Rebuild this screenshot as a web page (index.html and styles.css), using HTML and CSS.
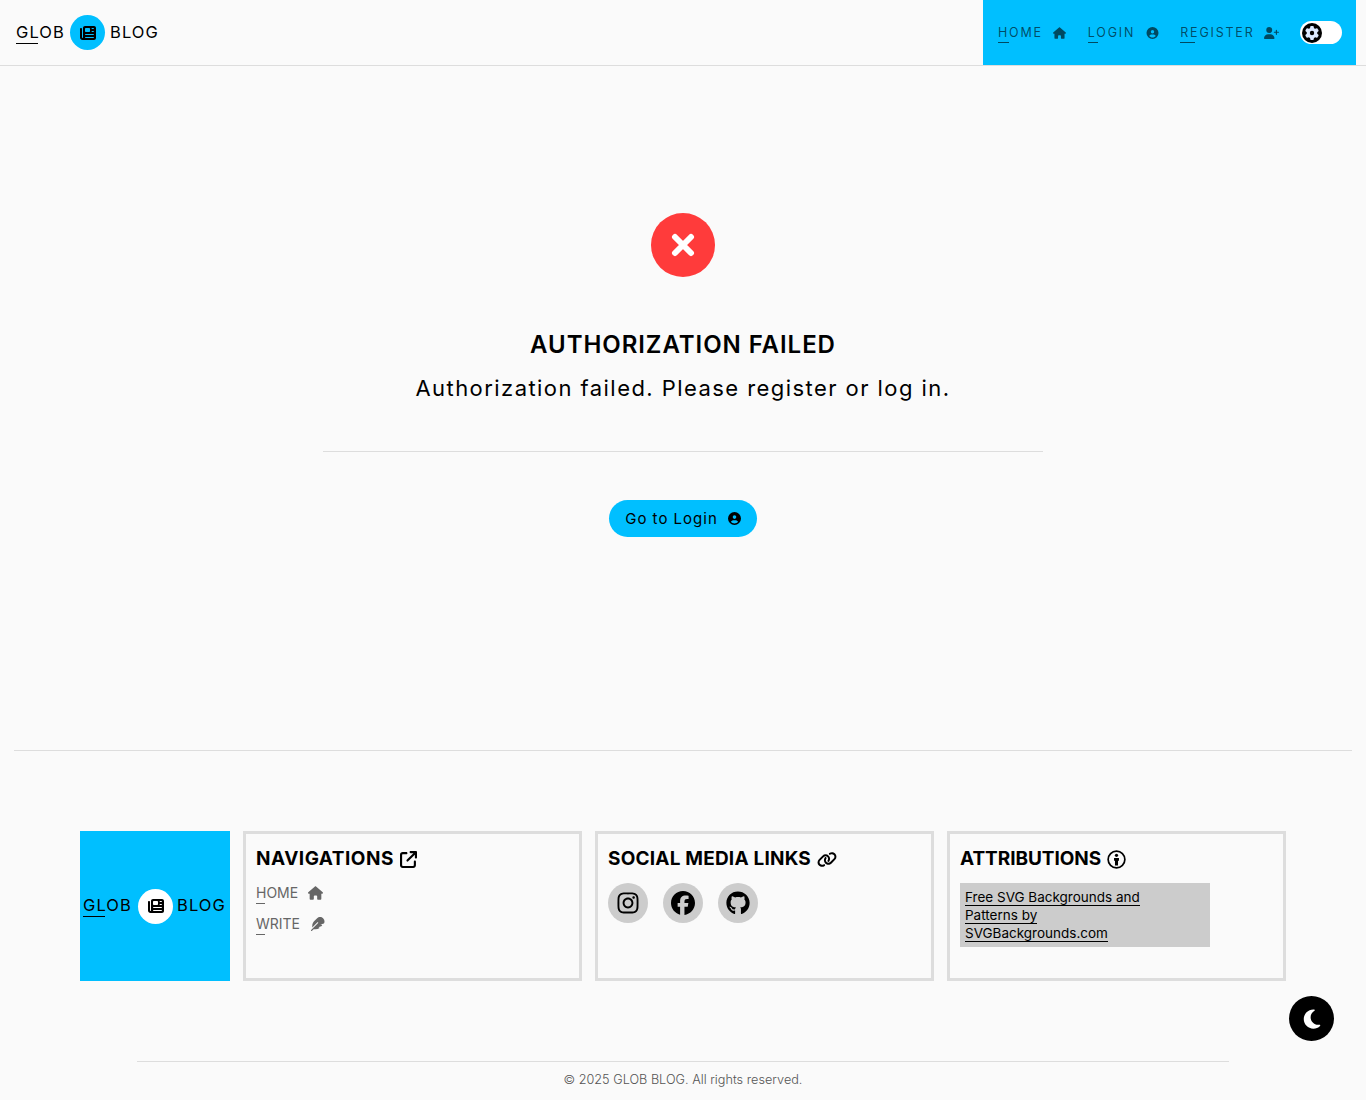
FILE: index.html
```html
<!DOCTYPE html>
<html lang="en">
<head>
  <meta charset="UTF-8" />
  <meta name="viewport" content="width=device-width, initial-scale=1.0"/>
  <title>Glob Blog</title>
  <link rel="stylesheet" href="styles.css">
</head>
<body>
  <svg class="defs" width="0" height="0">
    <symbol id="i-house" viewBox="0 0 576 512"><path d="M575.8 255.5c0 18-15 32.1-32 32.1h-32l.7 160.2c0 2.7-.2 5.4-.5 8.1V472c0 22.1-17.9 40-40 40H456c-1.1 0-2.2 0-3.3-.1c-1.4 .1-2.8 .1-4.2 .1H416 392c-22.1 0-40-17.9-40-40V448 384c0-17.7-14.3-32-32-32H256c-17.7 0-32 14.3-32 32v64 24c0 22.1-17.9 40-40 40H160 128.1c-1.5 0-3-.1-4.5-.2c-1.2 .1-2.4 .2-3.6 .2H104c-22.1 0-40-17.9-40-40V360c0-.9 0-1.9 .1-2.8V287.6H32c-18 0-32-14-32-32.1c0-9 3-17 10-24L266.4 8c7-7 15-8 22-8s15 2 21 7L564.8 231.5c8 7 12 15 11 24z"/></symbol>
    <symbol id="i-user" viewBox="0 0 512 512"><path d="M399 384.2C376.9 345.8 335.4 320 288 320H224c-47.4 0-88.9 25.8-111 64.2c35.2 39.2 86.2 63.8 143 63.8s107.8-24.7 143-63.8zM0 256a256 256 0 1 1 512 0A256 256 0 1 1 0 256zm256 16a72 72 0 1 0 0-144 72 72 0 1 0 0 144z"/></symbol>
    <symbol id="i-user-plus" viewBox="0 0 640 512"><path d="M96 128a128 128 0 1 1 256 0A128 128 0 1 1 96 128zM0 482.3C0 383.8 79.8 304 178.3 304h91.4C368.2 304 448 383.8 448 482.3c0 16.4-13.3 29.7-29.7 29.7H29.7C13.3 512 0 498.7 0 482.3zM504 312V248H440c-13.3 0-24-10.7-24-24s10.7-24 24-24h64V136c0-13.3 10.7-24 24-24s24 10.7 24 24v64h64c13.3 0 24 10.7 24 24s-10.7 24-24 24H552v64c0 13.3-10.7 24-24 24s-24-10.7-24-24z"/></symbol>
    <symbol id="i-news" viewBox="0 0 512 512"><path d="M96 96c0-35.3 28.7-64 64-64H448c35.3 0 64 28.7 64 64V416c0 35.3-28.7 64-64 64H80c-44.2 0-80-35.8-80-80V128c0-17.7 14.3-32 32-32s32 14.3 32 32V400c0 8.8 7.2 16 16 16s16-7.2 16-16V96zm64 24v80c0 13.3 10.7 24 24 24H296c13.3 0 24-10.7 24-24V120c0-13.3-10.7-24-24-24H184c-13.3 0-24 10.7-24 24zm208-8c0 8.8 7.2 16 16 16h48c8.8 0 16-7.2 16-16s-7.2-16-16-16H384c-8.8 0-16 7.2-16 16zm0 96c0 8.8 7.2 16 16 16h48c8.8 0 16-7.2 16-16s-7.2-16-16-16H384c-8.8 0-16 7.2-16 16zM160 304c0 8.8 7.2 16 16 16H432c8.8 0 16-7.2 16-16s-7.2-16-16-16H176c-8.8 0-16 7.2-16 16zm0 96c0 8.8 7.2 16 16 16H432c8.8 0 16-7.2 16-16s-7.2-16-16-16H176c-8.8 0-16 7.2-16 16z"/></symbol>
    <symbol id="i-gear" viewBox="0 0 512 512"><path d="M495.9 166.6c3.2 8.7 .5 18.4-6.4 24.6l-43.3 39.4c1.1 8.3 1.7 16.8 1.7 25.4s-.6 17.1-1.7 25.4l43.3 39.4c6.9 6.2 9.6 15.9 6.4 24.6c-4.4 11.9-9.7 23.3-15.8 34.3l-4.7 8.1c-6.6 11-14 21.4-22.1 31.2c-5.9 7.2-15.7 9.6-24.5 6.8l-55.7-17.7c-13.4 10.3-28.2 18.9-44 25.4l-12.5 57.1c-2 9.1-9 16.3-18.2 17.8c-13.8 2.3-28 3.5-42.5 3.5s-28.7-1.2-42.5-3.5c-9.2-1.5-16.2-8.7-18.2-17.8l-12.5-57.1c-15.8-6.5-30.6-15.1-44-25.4L83.1 425.9c-8.8 2.8-18.6 .3-24.5-6.8c-8.1-9.8-15.5-20.2-22.1-31.2l-4.7-8.1c-6.1-11-11.4-22.4-15.8-34.3c-3.2-8.7-.5-18.4 6.4-24.6l43.3-39.4C64.6 273.1 64 264.6 64 256s.6-17.1 1.7-25.4L22.4 191.2c-6.9-6.2-9.6-15.9-6.4-24.6c4.4-11.9 9.7-23.3 15.8-34.3l4.7-8.1c6.6-11 14-21.4 22.1-31.2c5.9-7.2 15.7-9.6 24.5-6.8l55.7 17.7c13.4-10.3 28.2-18.9 44-25.4l12.5-57.1c2-9.1 9-16.3 18.2-17.8C227.3 1.2 241.5 0 256 0s28.7 1.2 42.5 3.5c9.2 1.5 16.2 8.7 18.2 17.8l12.5 57.1c15.8 6.5 30.6 15.1 44 25.4l55.7-17.7c8.8-2.8 18.6-.3 24.5 6.8c8.1 9.8 15.5 20.2 22.1 31.2l4.7 8.1c6.1 11 11.4 22.4 15.8 34.3zM256 336a80 80 0 1 0 0-160 80 80 0 1 0 0 160z"/></symbol>
  </svg>

  <header class="topbar">
    <a class="logo" href="#">
      <span class="logo-word u-logo">GLOB</span>
      <span class="logo-badge"><svg class="icon"><use href="#i-news"/></svg></span>
      <span class="logo-word">BLOG</span>
    </a>
    <nav class="nav">
      <a class="nav-link" href="#"><span class="u-home">HOME</span><svg class="icon nav-house"><use href="#i-house"/></svg></a>
      <a class="nav-link" href="#"><span class="u-login">LOGIN</span><svg class="icon nav-user"><use href="#i-user"/></svg></a>
      <a class="nav-link" href="#"><span class="u-register">REGISTER</span><svg class="icon nav-plus"><use href="#i-user-plus"/></svg></a>
      <div class="toggle"><span class="toggle-knob"><svg class="icon"><use href="#i-gear"/></svg></span></div>
    </nav>
  </header>

  <main class="status">
    <div class="status-icon">
      <svg viewBox="0 0 24 24"><path d="M4 4L20 20M20 4L4 20"/></svg>
    </div>
    <h1>AUTHORIZATION FAILED</h1>
    <p>Authorization failed. Please register or log in.</p>
    <hr class="status-rule" />
    <a class="btn" href="#">Go to Login <svg class="icon"><use href="#i-user"/></svg></a>
  </main>

  <hr class="page-rule" />

  <footer class="footer">
    <div class="footer-grid">
      <a class="logo logo-square" href="#">
        <span class="logo-word u-logo">GLOB</span>
        <span class="logo-badge"><svg class="icon"><use href="#i-news"/></svg></span>
        <span class="logo-word">BLOG</span>
      </a>

      <section class="card">
        <h2 class="title-nav">NAVIGATIONS
          <svg class="icon" viewBox="0 0 512 512"><path d="M320 0c-17.7 0-32 14.3-32 32s14.3 32 32 32h82.7L201.4 265.4c-12.5 12.5-12.5 32.8 0 45.3s32.8 12.5 45.3 0L448 109.3V192c0 17.7 14.3 32 32 32s32-14.3 32-32V32c0-17.7-14.3-32-32-32H320zM80 32C35.8 32 0 67.8 0 112V432c0 44.2 35.8 80 80 80H400c44.2 0 80-35.8 80-80V320c0-17.7-14.3-32-32-32s-32 14.3-32 32V432c0 8.8-7.2 16-16 16H80c-8.8 0-16-7.2-16-16V112c0-8.8 7.2-16 16-16H192c17.7 0 32-14.3 32-32s-14.3-32-32-32H80z"/></svg>
        </h2>
        <a class="foot-link" href="#"><span class="u-foot">HOME</span><svg class="icon"><use href="#i-house"/></svg></a>
        <a class="foot-link" href="#"><span class="u-foot">WRITE</span>
          <svg class="icon" viewBox="0 0 512 512"><path d="M278.5 215.6L23 471c-9.4 9.4-9.4 24.6 0 33.9s24.6 9.4 33.9 0l57-57h68c49.7 0 97.9-14.4 139-41c11.1-7.2 5.5-23-7.8-23c-5.1 0-9.2-4.1-9.2-9.2c0-4.1 2.7-7.6 6.5-8.8l81-24.3c2.5-.8 4.8-2.1 6.7-4l22.4-22.4c10.1-10.1 2.9-27.3-11.3-27.3l-32.2 0c-5.1 0-9.2-4.1-9.2-9.2c0-4.1 2.7-7.6 6.5-8.8l112-33.6c4-1.2 7.4-3.9 9.3-7.7C506.4 207.6 512 184.1 512 160c0-41-16.3-80.3-45.3-109.3l-5.5-5.5C432.3 16.3 393 0 352 0s-80.3 16.3-109.3 45.3L139 149C91 197 64 262.1 64 330v55.3L253.6 195.8c6.2-6.2 16.4-6.2 22.6 0c5.4 5.4 6.1 13.6 2.2 19.8z"/></svg>
        </a>
      </section>

      <section class="card">
        <h2>SOCIAL MEDIA LINKS
          <svg class="icon icon-link" viewBox="0 0 640 512"><path d="M579.8 267.7c56.5-56.5 56.5-148 0-204.5c-50-50-128.8-56.5-186.3-15.4l-1.6 1.1c-14.4 10.3-17.7 30.3-7.4 44.6s30.3 17.7 44.6 7.4l1.6-1.1c32.1-22.9 76-19.3 103.8 8.6c31.5 31.5 31.5 82.5 0 114L422.3 334.8c-31.5 31.5-82.5 31.5-114 0c-27.9-27.9-31.5-71.8-8.6-103.8l1.1-1.6c10.3-14.4 6.9-34.4-7.4-44.6s-34.4-6.9-44.6 7.4l-1.1 1.6C206.5 251.2 213 330 263 380c56.5 56.5 148 56.5 204.5 0L579.8 267.7zM60.2 244.3c-56.5 56.5-56.5 148 0 204.5c50 50 128.8 56.5 186.3 15.4l1.6-1.1c14.4-10.3 17.7-30.3 7.4-44.6s-30.3-17.7-44.6-7.4l-1.6 1.1c-32.1 22.9-76 19.3-103.8-8.6C74 372 74 321 105.5 289.5L217.7 177.2c31.5-31.5 82.5-31.5 114 0c27.9 27.9 31.5 71.8 8.6 103.9l-1.1 1.6c-10.3 14.4-6.9 34.4 7.4 44.6s34.4 6.9 44.6-7.4l1.1-1.6C433.5 260.8 427 182 377 132c-56.5-56.5-148-56.5-204.5 0L60.2 244.3z"/></svg>
        </h2>
        <div class="socials">
          <a class="social" href="#"><svg class="icon" viewBox="0 0 448 512"><path d="M224.1 141c-63.6 0-114.9 51.3-114.9 114.9s51.3 114.9 114.9 114.9S339 319.5 339 255.9 287.7 141 224.1 141zm0 189.6c-41.1 0-74.7-33.5-74.7-74.7s33.5-74.7 74.7-74.7 74.7 33.5 74.7 74.7-33.6 74.7-74.7 74.7zm146.4-194.3c0 14.9-12 26.8-26.8 26.8-14.9 0-26.8-12-26.8-26.8s12-26.8 26.8-26.8 26.8 12 26.8 26.8zm76.1 27.2c-1.7-35.9-9.9-67.7-36.2-93.9-26.2-26.2-58-34.4-93.9-36.2-37-2.1-147.9-2.1-184.9 0-35.8 1.7-67.6 9.9-93.9 36.1s-34.4 58-36.2 93.9c-2.1 37-2.1 147.9 0 184.9 1.7 35.9 9.9 67.7 36.2 93.9s58 34.4 93.9 36.2c37 2.1 147.9 2.1 184.9 0 35.9-1.7 67.7-9.9 93.9-36.2 26.2-26.2 34.4-58 36.2-93.9 2.1-37 2.1-147.8 0-184.8zM398.8 388c-7.8 19.6-22.9 34.7-42.6 42.6-29.5 11.7-99.5 9-132.1 9s-102.7 2.6-132.1-9c-19.6-7.8-34.7-22.9-42.6-42.6-11.7-29.5-9-99.5-9-132.1s-2.6-102.7 9-132.1c7.8-19.6 22.9-34.7 42.6-42.6 29.5-11.7 99.5-9 132.1-9s102.7-2.6 132.1 9c19.6 7.8 34.7 22.9 42.6 42.6 11.7 29.5 9 99.5 9 132.1s2.7 102.7-9 132.1z"/></svg></a>
          <a class="social" href="#"><svg class="icon" viewBox="0 0 512 512"><path d="M512 256C512 114.6 397.4 0 256 0S0 114.6 0 256C0 376 82.7 476.8 194.2 504.5V334.2H141.4V256h52.8V222.3c0-87.1 39.4-127.5 125-127.5c16.2 0 44.2 3.2 55.7 6.4V172c-6-.6-16.5-1-29.6-1c-42 0-58.2 15.9-58.2 57.2V256h83.6l-14.4 78.2H287V510.1C413.8 494.8 512 386.9 512 256h0z"/></svg></a>
          <a class="social" href="#"><svg class="icon" viewBox="0 0 496 512"><path d="M165.9 397.4c0 2-2.3 3.6-5.2 3.6-3.3 .3-5.6-1.3-5.6-3.6 0-2 2.3-3.6 5.2-3.6 3-.3 5.6 1.3 5.6 3.6zm-31.1-4.5c-.7 2 1.3 4.3 4.3 4.9 2.6 1 5.6 0 6.2-2s-1.3-4.3-4.3-5.2c-2.6-.7-5.5 .3-6.2 2.3zm44.2-1.7c-2.9 .7-4.9 2.6-4.6 4.9 .3 2 2.9 3.3 5.9 2.6 2.9-.7 4.9-2.6 4.6-4.6-.3-1.9-3-3.2-5.9-2.9zM244.8 8C106.1 8 0 113.3 0 252c0 110.9 69.8 205.8 169.5 239.2 12.8 2.3 17.3-5.6 17.3-12.1 0-6.2-.3-40.4-.3-61.4 0 0-70 15-84.7-29.8 0 0-11.4-29.1-27.8-36.6 0 0-22.9-15.7 1.6-15.4 0 0 24.9 2 38.6 25.8 21.9 38.6 58.6 27.5 72.9 20.9 2.3-16 8.8-27.1 16-33.7-55.9-6.2-112.3-14.3-112.3-110.5 0-27.5 7.6-41.3 23.6-58.9-2.6-6.5-11.1-33.3 2.6-67.9 20.9-6.5 69 27 69 27 20-5.6 41.5-8.5 62.8-8.5s42.8 2.9 62.8 8.5c0 0 48.1-33.6 69-27 13.7 34.7 5.2 61.4 2.6 67.9 16 17.7 25.8 31.5 25.8 58.9 0 96.5-58.9 104.2-114.8 110.5 9.2 7.9 17 22.9 17 46.4 0 33.7-.3 75.4-.3 83.6 0 6.5 4.6 14.4 17.3 12.1C428.2 457.8 496 362.9 496 252 496 113.3 383.5 8 244.8 8z"/></svg></a>
        </div>
      </section>

      <section class="card">
        <h2 class="title-attr">ATTRIBUTIONS
          <svg class="icon icon-info" viewBox="0 0 20 20"><circle cx="10" cy="10" r="8.8" fill="none" stroke="currentColor" stroke-width="1.8"/><circle cx="10" cy="5.6" r="1.7"/><path d="M7.4 8.3h5.2v3h-1v5h-3.2v-5h-1z"/></svg>
        </h2>
        <div class="credit"><a href="#">Free SVG Backgrounds and Patterns by SVGBackgrounds.com</a></div>
      </section>
    </div>

    <div class="copyright">© 2025 GLOB BLOG. All rights reserved.</div>
  </footer>

  <button class="theme-btn" aria-label="Dark mode">
    <svg class="icon" viewBox="0 0 384 512"><path d="M223.5 32C100 32 0 132.3 0 256S100 480 223.5 480c60.6 0 115.5-24.2 155.8-63.4c5-4.9 6.3-12.5 3.1-18.7s-10.1-9.7-17-8.5c-9.8 1.7-19.8 2.6-30.1 2.6c-96.9 0-175.5-78.8-175.5-176c0-65.8 36-123.1 89.3-153.3c6.1-3.5 9.2-10.5 7.7-17.3s-7.3-11.9-14.3-12.5c-6.3-.5-12.6-.8-19-.8z"/></svg>
  </button>
</body>
</html>
```

FILE: styles.css
```css
* {
  box-sizing: border-box;
}

body {
  font-family: Inter, 'Liberation Sans', sans-serif;
  background: #fafafa;
  margin: 0;
  color: #000;
}

a {
  color: inherit;
  text-decoration: none;
}

.defs {
  position: absolute;
}

.icon {
  display: block;
  width: 14px;
  height: 14px;
  fill: currentColor;
  flex: none;
}

/* first-letter underlines */
.u-logo, .u-home, .u-login, .u-register, .u-foot {
  position: relative;
  display: inline-block;
}

.u-logo::after, .u-home::after, .u-login::after, .u-register::after, .u-foot::after {
  content: "";
  position: absolute;
  left: 0;
  bottom: -2px;
  height: 1px;
  background: currentColor;
}

.u-logo::after { width: 22px; }
.u-home::after { width: 11px; }
.u-login::after { width: 10px; }
.u-register::after { width: 15px; }
.u-foot::after { width: 9px; bottom: -1px; }

/* top bar */
.topbar {
  display: flex;
  justify-content: space-between;
  height: 66px;
  padding-right: 10px;
  border-bottom: 1px solid #ddd;
}

.logo {
  display: flex;
  align-items: center;
  padding-left: 16px;
  gap: 5px;
}

.logo-word {
  margin-bottom: 2px;
  font-size: 16.5px;
  line-height: 20px;
  letter-spacing: 1.1px;
}

.logo-badge {
  display: flex;
  align-items: center;
  justify-content: center;
  width: 35px;
  height: 35px;
  border-radius: 50%;
  background: #00bfff;
}

.logo-badge .icon {
  width: 16px;
  height: 16px;
}

.nav {
  display: flex;
  align-items: center;
  width: 373px;
  height: 65px;
  padding-left: 15px;
  background: #00bfff;
  color: rgba(0, 0, 0, 0.62);
}

.nav-link {
  display: flex;
  align-items: center;
  font-size: 12.5px;
  line-height: 16px;
  letter-spacing: 1.8px;
}

.nav-link .icon {
  width: 13px;
  height: 12px;
}

.nav-house { margin: 0 22px 0 10px; }
.nav-user { margin: 0 21px 0 11px; }
.nav-link .nav-plus { width: 15px; margin: 0 21px 0 9px; }

.toggle {
  display: flex;
  align-items: center;
  width: 42px;
  height: 23px;
  padding-left: 2px;
  border-radius: 12px;
  background: #fff;
}

.toggle-knob {
  display: flex;
  align-items: center;
  justify-content: center;
  width: 20px;
  height: 20px;
  border-radius: 50%;
  background: #000;
  color: #dbe9ff;
}

.toggle-knob .icon {
  width: 14px;
  height: 14px;
}

/* status message */
.status {
  display: flex;
  flex-direction: column;
  align-items: center;
  height: 684px;
  padding-top: 147px;
}

.status-icon {
  display: flex;
  align-items: center;
  justify-content: center;
  width: 64px;
  height: 64px;
  border-radius: 50%;
  background: #ff3b3b;
}

.status-icon svg {
  width: 24px;
  height: 24px;
  fill: none;
  stroke: #fff;
  stroke-width: 6;
  stroke-linecap: round;
}

.status h1 {
  margin: 53px 0 0;
  font-size: 24px;
  line-height: 30px;
  font-weight: 600;
  letter-spacing: 0.95px;
}

.status p {
  margin: 13px 0 0;
  font-size: 22px;
  line-height: 30px;
  letter-spacing: 1.44px;
}

.status-rule {
  width: 720px;
  height: 1px;
  margin: 48px 0 0;
  border: none;
  background: #ddd;
}

.btn {
  display: flex;
  align-items: center;
  justify-content: center;
  gap: 10px;
  width: 148px;
  height: 37px;
  margin-top: 48px;
  border-radius: 19px;
  background: #00bfff;
  font-size: 15px;
  letter-spacing: 1px;
}

.btn .icon {
  width: 13px;
  height: 13px;
}

.page-rule {
  height: 1px;
  margin: 0 14px;
  border: none;
  background: #ddd;
}

/* footer */
.footer {
  padding: 80px 80px 0;
}

.footer-grid {
  display: grid;
  grid-template-columns: 150px repeat(3, 339px);
  gap: 13px;
  height: 150px;
}

.logo-square {
  padding-left: 3px;
  gap: 0;
  background: #00bfff;
}

.logo-square .logo-badge {
  margin: 0 4px 0 6px;
  background: #fff;
}

.card {
  padding: 13px 10px;
  border: 3px solid #ddd;
}

.card h2 {
  display: flex;
  align-items: center;
  gap: 6px;
  margin: 0 0 12px;
  font-size: 19px;
  line-height: 24px;
  font-weight: 700;
  letter-spacing: 0.2px;
}

.card .title-nav {
  letter-spacing: 0.5px;
}

.card .title-attr {
  letter-spacing: -0.05px;
}

.card h2 .icon {
  width: 17px;
  height: 17px;
}

.card h2 .icon-link {
  width: 20px;
}

.card h2 .icon-info {
  width: 19px;
  height: 19px;
}

.foot-link {
  display: flex;
  align-items: center;
  gap: 10px;
  margin-bottom: 11px;
  color: #666;
  font-size: 14px;
  line-height: 20px;
}

.foot-link .icon {
  width: 15px;
  height: 14px;
}

.socials {
  display: flex;
  gap: 15px;
}

.social {
  display: flex;
  align-items: center;
  justify-content: center;
  width: 40px;
  height: 40px;
  border-radius: 50%;
  background: #ccc;
}

.social .icon {
  width: 24px;
  height: 24px;
}

.credit {
  width: 250px;
  padding: 5px 60px 5px 5px;
  background: #ccc;
  font-size: 13.5px;
  line-height: 18px;
}

.credit a {
  border-bottom: 1px solid #000;
}

.copyright {
  width: 1092px;
  margin: 80px auto 0;
  padding-top: 9px;
  border-top: 1px solid #ddd;
  color: #555;
  font-size: 12.7px;
  line-height: 18px;
  font-weight: 300;
  text-align: center;
}

.theme-btn {
  position: fixed;
  right: 32px;
  bottom: 59px;
  display: flex;
  align-items: center;
  justify-content: center;
  width: 45px;
  height: 45px;
  padding: 0;
  border: none;
  border-radius: 50%;
  background: #000;
  color: #fff;
}

.theme-btn .icon {
  width: 20px;
  height: 22px;
}
```
